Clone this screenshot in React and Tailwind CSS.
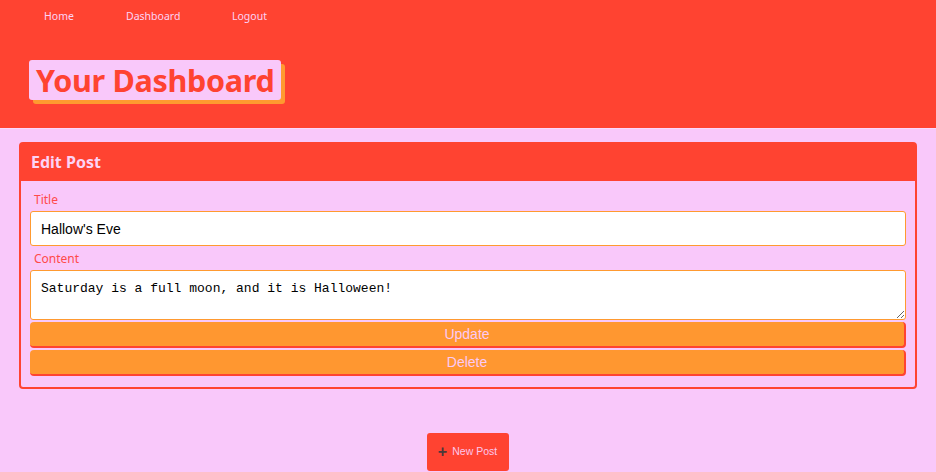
export default function App() {
  return (
    <div className="min-h-[472px] w-[936px] bg-[#f9c8fa] font-['Noto_Sans',sans-serif] overflow-hidden">
      <header className="h-[128px] bg-[#ff4331]">
        <nav className="flex pl-[44px] pt-[8px] text-[10.5px] text-[#fcd3f5]">
          <a className="w-[82px] leading-[17px]">Home</a>
          <a className="w-[106px] leading-[17px]">Dashboard</a>
          <a className="leading-[17px]">Logout</a>
        </nav>
        <div className="pl-[29px] pt-[35px]">
          <h1 className="inline-block bg-[#f9c8fa] rounded-[3px] px-[7px] h-[40px] leading-[40px] text-[30.5px] font-bold text-[#ff4331] shadow-[4px_4px_0_#ff9a30] tracking-[-0.3px]">
            Your Dashboard
          </h1>
        </div>
      </header>
      <div className="h-px bg-[#fbd9fb]"></div>
      <main className="px-[19px] pt-[13px]">
        <section className="border-2 border-[#ff4331] rounded-[4px] h-[247px]">
          <div className="bg-[#ff4331] h-[38px] flex items-center pl-[10px] -mt-px">
            <h2 className="text-[16px] font-bold text-[#fcd3f5]">Edit Post</h2>
          </div>
          <div className="px-[9px] pt-[10px]">
            <label className="block pl-[4px] text-[12px] leading-[17px] text-[#ff4a4a]">Title</label>
            <input
              readOnly
              value="Hallow's Eve"
              className="mt-[3px] block w-full h-[35px] bg-white border border-[#ff9a30] rounded-[3px] px-[10px] text-[14px] text-black font-['Liberation_Sans',Arial,sans-serif] outline-none"
            />
            <label className="block mt-[4px] pl-[4px] text-[12px] leading-[17px] text-[#ff4a4a]">Content</label>
            <textarea
              readOnly
              value="Saturday is a full moon, and it is Halloween!"
              className="mt-[3px] block w-full h-[50px] bg-white border border-[#ff9a30] rounded-[3px] px-[10px] pt-[10px] text-[13px] leading-[16px] text-black font-['Liberation_Mono',monospace] outline-none resize-y"
            />
            <button className="mt-[2px] block w-full h-[26px] bg-[#ff9730] rounded-[4px] border-b-2 border-r-2 border-[#ff4331] text-[14px] text-[#fbc9f5] font-['Liberation_Sans',Arial,sans-serif]">
              Update
            </button>
            <button className="mt-[2px] block w-full h-[26px] bg-[#ff9730] rounded-[4px] border-b-2 border-r-2 border-[#ff4331] text-[14px] text-[#fbc9f5] font-['Liberation_Sans',Arial,sans-serif]">
              Delete
            </button>
          </div>
        </section>
      </main>
      <div className="flex justify-center pt-[44px] pr-[1px]">
        <button className="w-[82px] h-[38px] bg-[#ff4331] rounded-[3px] flex items-center justify-center gap-[5px] text-[10.5px] text-[#fcc7ec] font-['Liberation_Sans',Arial,sans-serif]">
          <span className="text-[#4a3a3a] text-[16px] font-bold leading-none">+</span>
          <span>New Post</span>
        </button>
      </div>
    </div>
  );
}
